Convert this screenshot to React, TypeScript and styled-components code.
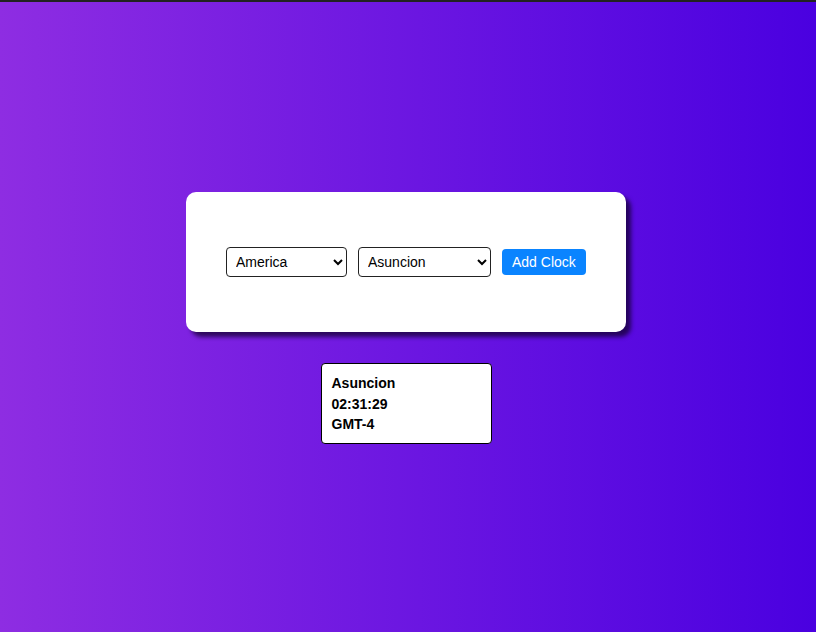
import styled, { createGlobalStyle } from "styled-components";

const GlobalStyle = createGlobalStyle`
    html, body {
        margin: 0;
        padding: 0;
    }
    body {
        font-family: "Liberation Sans", Arial, sans-serif;
        border-top: 2px solid #222;
    }
`;

const Page = styled.div`
    min-height: 630px;
    box-sizing: border-box;
    background: linear-gradient(to right, #8e2de2, #4a00e0);
    display: flex;
    flex-direction: column;
    align-items: center;
    justify-content: center;
    gap: 31px;
    padding: 2px 4px 0 0;
`;

const Panel = styled.div`
    width: 440px;
    box-sizing: border-box;
    background: #ffffff;
    border-radius: 10px;
    padding: 55px 40px;
    box-shadow: 5px 5px 4px rgba(20, 0, 50, 0.75);
    display: flex;
    align-items: center;
    gap: 11px;
`;

const Select = styled.select<{ $w: number }>`
    width: ${(p) => p.$w}px;
    height: 30px;
    font-family: "Liberation Sans", Arial, sans-serif;
    font-size: 14px;
    padding: 0 5px;
    border: 1px solid #222;
    border-radius: 4px;
    background: #fff;
    color: #000;
`;

const AddButton = styled.button`
    height: 26px;
    padding: 0 10px;
    border: none;
    border-radius: 4px;
    background: #0a84ff;
    color: #fff;
    font-family: "Liberation Sans", Arial, sans-serif;
    font-size: 14px;
    cursor: pointer;
`;

const ClockCard = styled.div`
    width: 171px;
    box-sizing: border-box;
    background: #fff;
    border: 1px solid #000;
    border-radius: 4px;
    padding: 9px 10px 8px;
    font-size: 14px;
    font-weight: bold;
    line-height: 20.5px;
    color: #000;
`;

export default function App() {
    return (
        <>
            <GlobalStyle />
            <Page>
                <Panel>
                    <Select $w={121} defaultValue="America">
                        <option>America</option>
                        <option>Europe</option>
                        <option>Asia</option>
                    </Select>
                    <Select $w={133} defaultValue="Asuncion">
                        <option>Asuncion</option>
                        <option>Bogota</option>
                        <option>Lima</option>
                    </Select>
                    <AddButton>Add Clock</AddButton>
                </Panel>
                <ClockCard>
                    <div>Asuncion</div>
                    <div>02:31:29</div>
                    <div>GMT-4</div>
                </ClockCard>
            </Page>
        </>
    );
}
